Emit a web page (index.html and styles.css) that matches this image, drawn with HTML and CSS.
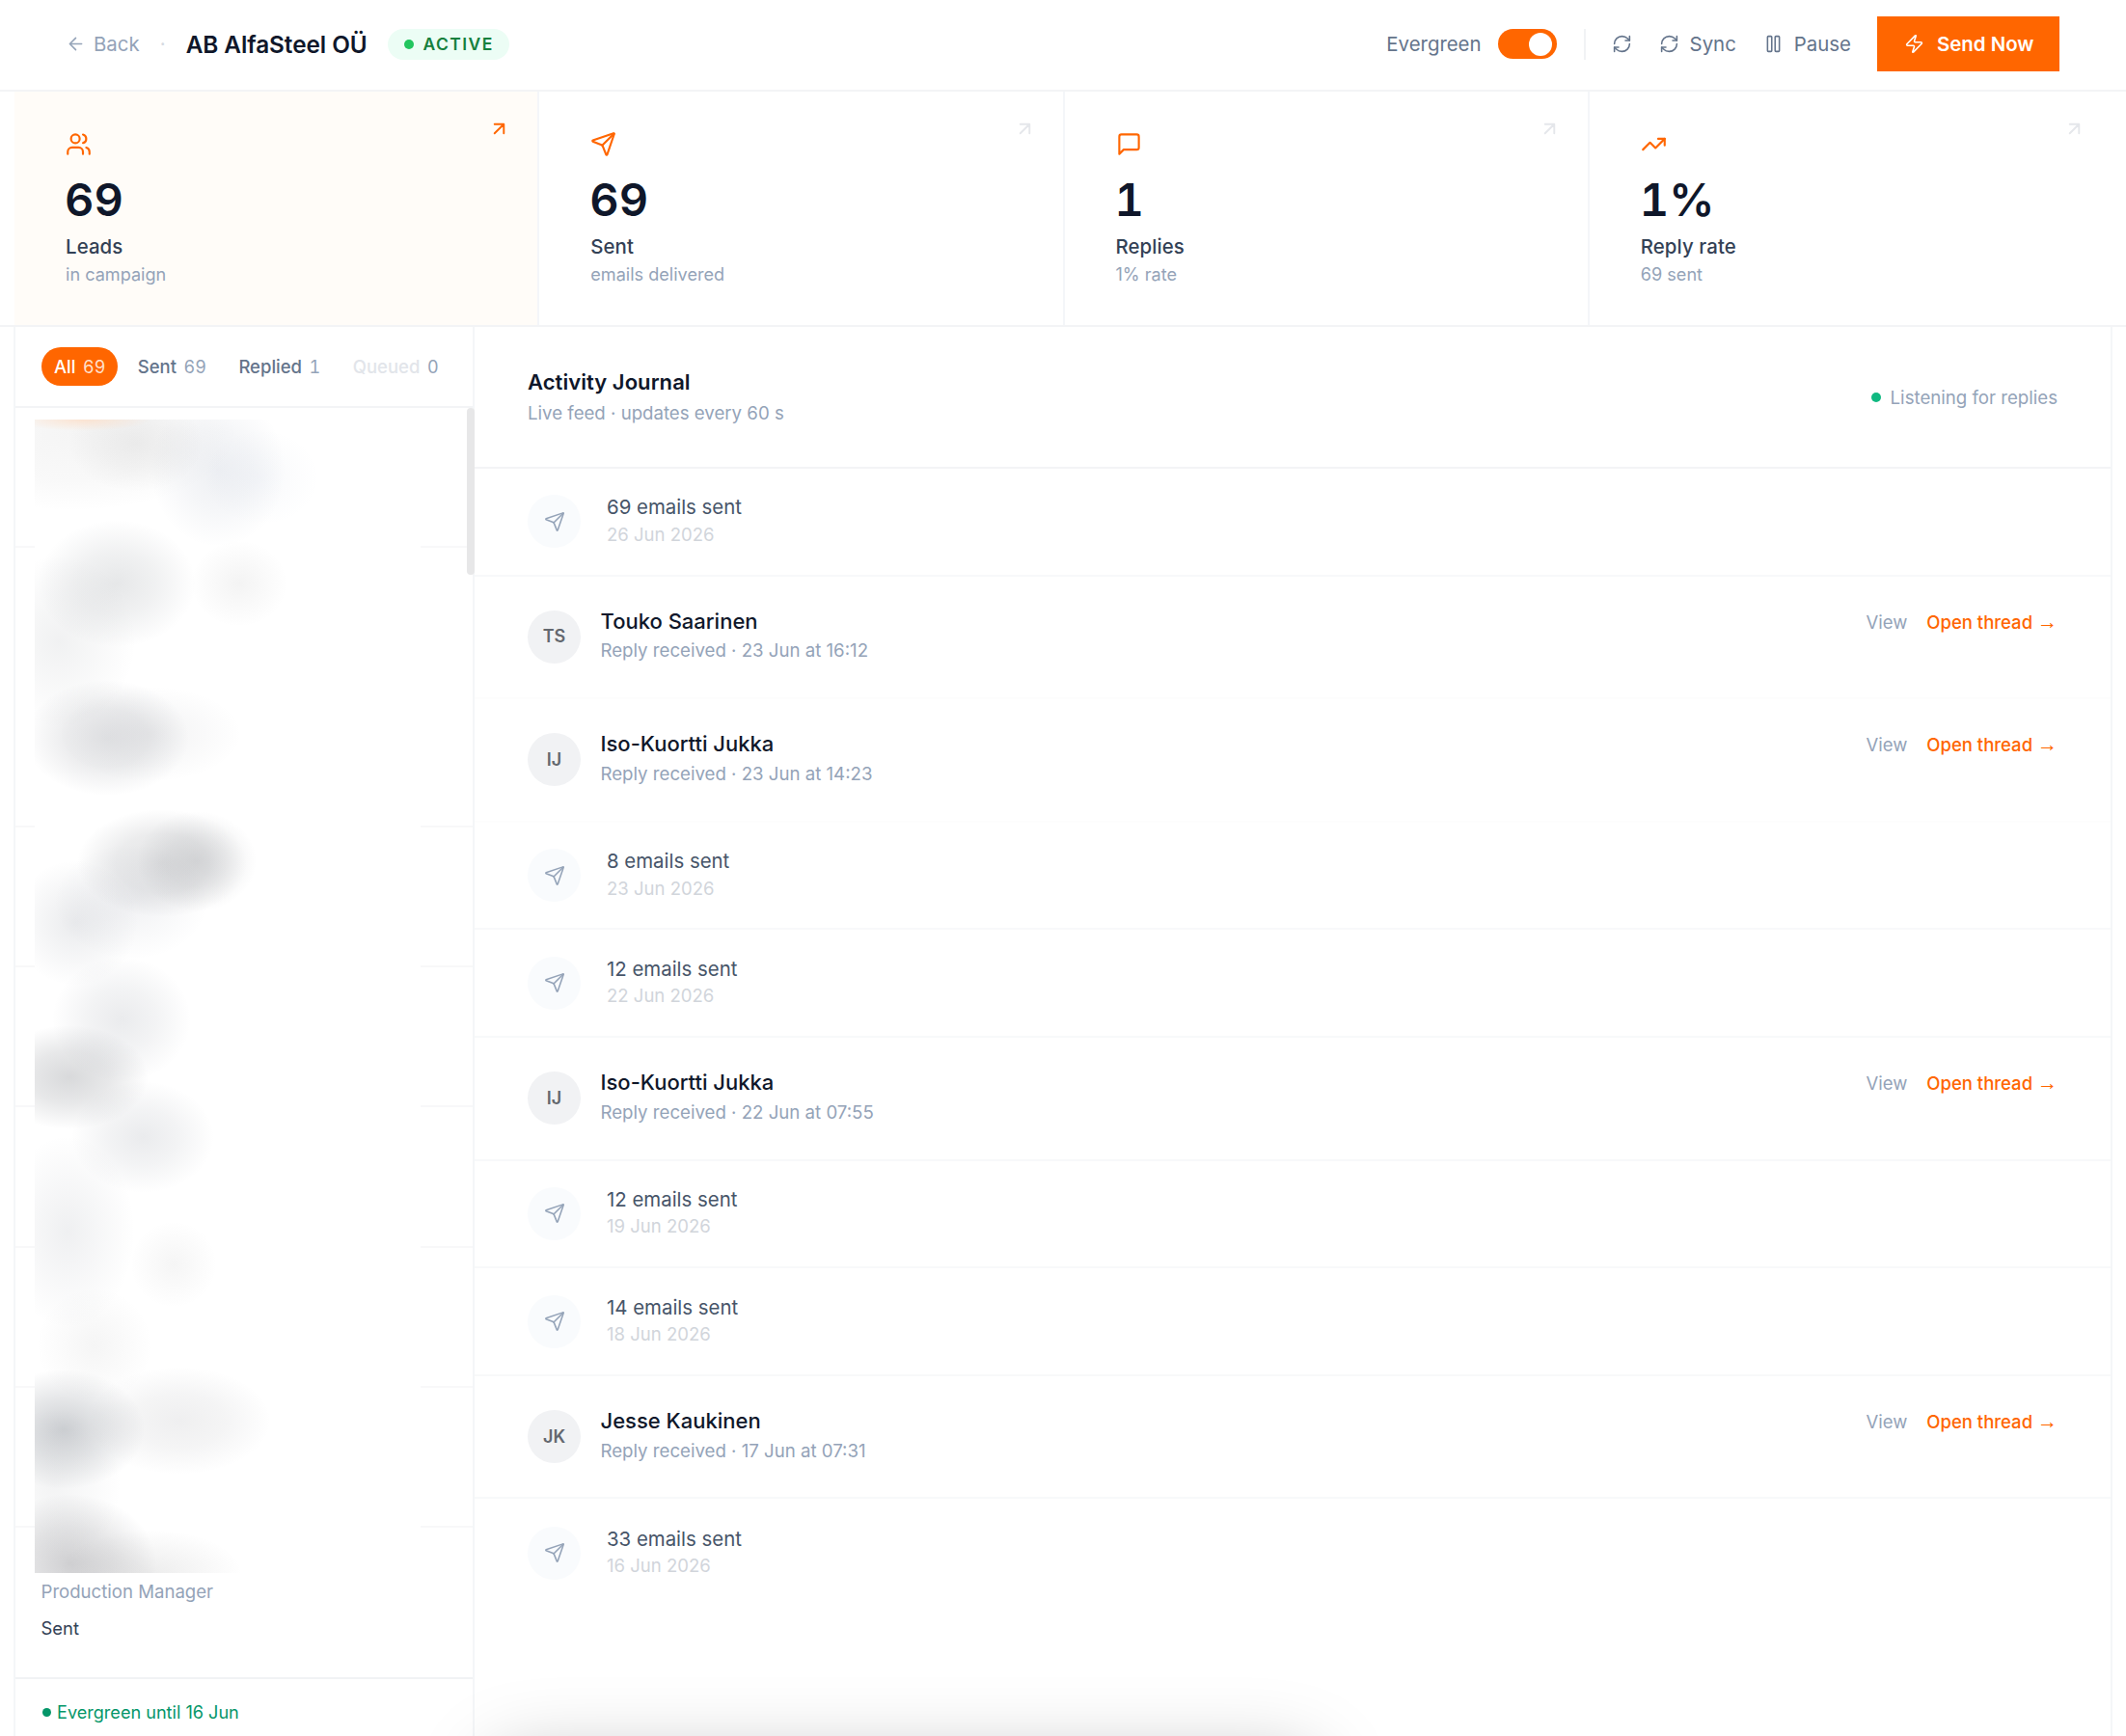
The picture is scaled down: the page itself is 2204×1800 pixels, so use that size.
FILE: index.html
```html
<!DOCTYPE html>
<html lang="en">
<head>
<meta charset="utf-8">
<title>AB AlfaSteel OÜ</title>
<link rel="stylesheet" href="styles.css">
</head>
<body>
<svg class="sprite" aria-hidden="true">
  <symbol id="i-back" viewBox="0 0 24 24"><path d="m12 19-7-7 7-7M19 12H5"/></symbol>
  <symbol id="i-refresh" viewBox="0 0 24 24"><path d="M3 12a9 9 0 0 1 9-9 9.75 9.75 0 0 1 6.74 2.74L21 8"/><path d="M21 3v5h-5"/><path d="M21 12a9 9 0 0 1-9 9 9.75 9.75 0 0 1-6.74-2.74L3 16"/><path d="M8 16H3v5"/></symbol>
  <symbol id="i-pause" viewBox="0 0 24 24"><rect x="14" y="3" width="5" height="18" rx="1"/><rect x="5" y="3" width="5" height="18" rx="1"/></symbol>
  <symbol id="i-bolt" viewBox="0 0 24 24"><path d="M4 14a1 1 0 0 1-.78-1.63l9.9-10.2a.5.5 0 0 1 .86.46l-1.92 6.02A1 1 0 0 0 13 10h7a1 1 0 0 1 .78 1.63l-9.9 10.2a.5.5 0 0 1-.86-.46l1.92-6.02A1 1 0 0 0 11 14z"/></symbol>
  <symbol id="i-users" viewBox="0 0 24 24"><path d="M16 21v-2a4 4 0 0 0-4-4H6a4 4 0 0 0-4 4v2"/><circle cx="9" cy="7" r="4"/><path d="M22 21v-2a4 4 0 0 0-3-3.87"/><path d="M16 3.13a4 4 0 0 1 0 7.75"/></symbol>
  <symbol id="i-send" viewBox="0 0 24 24"><path d="M14.536 21.686a.5.5 0 0 0 .937-.024l6.5-19a.496.496 0 0 0-.635-.635l-19 6.5a.5.5 0 0 0-.024.937l7.93 3.18a2 2 0 0 1 1.112 1.11z"/><path d="m21.854 2.147-10.94 10.939"/></symbol>
  <symbol id="i-message" viewBox="0 0 24 24"><path d="M21 15a2 2 0 0 1-2 2H7l-4 4V5a2 2 0 0 1 2-2h14a2 2 0 0 1 2 2z"/></symbol>
  <symbol id="i-trend" viewBox="0 0 24 24"><path d="M22 7l-8.5 8.5-5-5L2 17"/><path d="M16 7h6v6"/></symbol>
  <symbol id="i-out" viewBox="0 0 24 24"><path d="M7 7h10v10M7 17 17 7"/></symbol>
</svg>

<header class="topbar">
  <div class="group">
    <a class="back"><svg class="ico"><use href="#i-back"/></svg>Back</a>
    <span class="sep">·</span>
    <h1>AB AlfaSteel OÜ</h1>
    <span class="badge"><i></i>ACTIVE</span>
  </div>
  <div class="group actions">
    <span>Evergreen</span>
    <span class="toggle"><i></i></span>
    <span class="divider"></span>
    <svg class="ico refresh"><use href="#i-refresh"/></svg>
    <span class="act sync"><svg class="ico"><use href="#i-refresh"/></svg>Sync</span>
    <span class="act pause"><svg class="ico"><use href="#i-pause"/></svg>Pause</span>
    <button class="send"><svg class="ico"><use href="#i-bolt"/></svg>Send Now</button>
  </div>
</header>

<section class="stats">
  <div class="stat active"><svg class="ico"><use href="#i-users"/></svg><svg class="out"><use href="#i-out"/></svg><b>69</b><strong>Leads</strong><small>in campaign</small></div>
  <div class="stat"><svg class="ico"><use href="#i-send"/></svg><svg class="out"><use href="#i-out"/></svg><b>69</b><strong>Sent</strong><small>emails delivered</small></div>
  <div class="stat"><svg class="ico"><use href="#i-message"/></svg><svg class="out"><use href="#i-out"/></svg><b>1</b><strong>Replies</strong><small>1% rate</small></div>
  <div class="stat"><svg class="ico"><use href="#i-trend"/></svg><svg class="out"><use href="#i-out"/></svg><b>1%</b><strong>Reply rate</strong><small>69 sent</small></div>
</section>

<main class="main">
  <aside class="leads">
    <nav class="tabs">
      <span class="tab on">All <em>69</em></span>
      <span class="tab">Sent <em>69</em></span>
      <span class="tab">Replied <em>1</em></span>
      <span class="tab off">Queued <em>0</em></span>
    </nav>
    <div class="list">
      <div class="lead"></div><div class="lead faint"></div><div class="lead"></div><div class="lead"></div>
      <div class="lead"></div><div class="lead"></div><div class="lead"></div><div class="lead"></div>
      <div class="lead last"><p class="role">Production Manager</p><p class="state">Sent</p></div>
      <div class="redacted"></div>
      <div class="thumb"></div>
    </div>
    <footer class="foot"><i></i>Evergreen until 16 Jun</footer>
  </aside>

  <section class="journal">
    <div class="jhead">
      <div><h2>Activity Journal</h2><p>Live feed · updates every 60 s</p></div>
      <span class="listening"><i></i>Listening for replies</span>
    </div>
    <div class="row sys"><span class="dot"><svg class="ico"><use href="#i-send"/></svg></span><div><p>69 emails sent</p><time>26 Jun 2026</time></div></div>
    <div class="row reply faint"><span class="dot">TS</span><div><h3>Touko Saarinen</h3><p>Reply received · 23 Jun at 16:12</p></div><div class="links"><a>View</a><a class="open">Open thread <i>→</i></a></div></div>
    <div class="row reply faint"><span class="dot">IJ</span><div><h3>Iso-Kuortti Jukka</h3><p>Reply received · 23 Jun at 14:23</p></div><div class="links"><a>View</a><a class="open">Open thread <i>→</i></a></div></div>
    <div class="row sys"><span class="dot"><svg class="ico"><use href="#i-send"/></svg></span><div><p>8 emails sent</p><time>23 Jun 2026</time></div></div>
    <div class="row sys"><span class="dot"><svg class="ico"><use href="#i-send"/></svg></span><div><p>12 emails sent</p><time>22 Jun 2026</time></div></div>
    <div class="row reply"><span class="dot">IJ</span><div><h3>Iso-Kuortti Jukka</h3><p>Reply received · 22 Jun at 07:55</p></div><div class="links"><a>View</a><a class="open">Open thread <i>→</i></a></div></div>
    <div class="row sys"><span class="dot"><svg class="ico"><use href="#i-send"/></svg></span><div><p>12 emails sent</p><time>19 Jun 2026</time></div></div>
    <div class="row sys"><span class="dot"><svg class="ico"><use href="#i-send"/></svg></span><div><p>14 emails sent</p><time>18 Jun 2026</time></div></div>
    <div class="row reply"><span class="dot">JK</span><div><h3>Jesse Kaukinen</h3><p>Reply received · 17 Jun at 07:31</p></div><div class="links"><a>View</a><a class="open">Open thread <i>→</i></a></div></div>
    <div class="row sys end"><span class="dot"><svg class="ico"><use href="#i-send"/></svg></span><div><p>33 emails sent</p><time>16 Jun 2026</time></div></div>
  </section>
</main>
<div class="dock"></div>
</body>
</html>
```
FILE: styles.css
```css
* { box-sizing: border-box; margin: 0; padding: 0; }
html, body { height: 1800px; overflow: hidden; }
body {
  display: flex; flex-direction: column;
  background: #fff; color: #0f172a;
  font: 400 20.4px/30px Inter, "Liberation Sans", sans-serif;
}
i, em { font-style: normal; }
.sprite { position: absolute; width: 0; height: 0; }
svg { display: block; flex: none; fill: none; stroke: currentColor; stroke-width: 2; stroke-linecap: round; stroke-linejoin: round; overflow: visible; }

/* top bar */
.topbar { height: 95px; flex: none; display: flex; justify-content: space-between; padding: 0 69px 2px 68px; border-bottom: 2px solid #f3f4f6; }
.group { display: flex; align-items: center; }
.back { display: flex; align-items: center; gap: 8px; color: #94a3b8; }
.back .ico { width: 21px; height: 21px; stroke-width: 1.8; }
.sep { width: 48px; text-align: center; color: #d5dae1; }
h1 { font-size: 24.3px; font-weight: 600; letter-spacing: -.05px; }
.badge { display: flex; align-items: center; height: 32px; margin-left: 21px; padding: 0 16px 0 17px; border-radius: 16px; background: #ecfdf5; color: #15803d; font-size: 17.5px; font-weight: 600; letter-spacing: 1.4px; }
.badge i { width: 10px; height: 10px; margin-right: 10px; border-radius: 50%; background: #22c55e; }
.actions { color: #64748b; }
.toggle { width: 61px; height: 31px; margin-left: 17px; border-radius: 16px; background: #ff6600; display: flex; align-items: center; justify-content: flex-end; padding: 0 5px; }
.toggle i { width: 24px; height: 24px; border-radius: 50%; background: #fff; }
.divider { width: 2px; height: 32px; margin: 0 27px 0 28px; background: #f1f3f5; }
.actions .ico { width: 21px; height: 21px; stroke-width: 1.8; }
.act { display: flex; align-items: center; gap: 10.5px; }
.sync { margin-left: 28.5px; }
.pause { margin-left: 28.5px; }
.send { display: flex; align-items: center; gap: 13px; width: 189px; height: 57px; margin-left: 27px; padding-left: 28px; border: 0; background: #ff6600; color: #fff; font: 600 20.4px/30px Inter, sans-serif; }

/* figures */
.stats { height: 244px; flex: none; display: grid; grid-template-columns: repeat(4, 1fr); padding: 0 12px 0 15px; border-bottom: 2px solid #f3f4f6; }
.stat { position: relative; display: flex; flex-direction: column; padding: 41px 0 0 53px; border-right: 2px solid #f4f6f9; }
.stat:last-child { border-right-color: transparent; }
.stat.active { background: #fffcf8; }
.stat .ico { width: 27px; height: 27px; color: #ff6600; stroke-width: 1.9; }
.stat .out { position: absolute; top: 27px; right: 28px; width: 23px; height: 23px; color: #e5e7eb; }
.stat.active .out { color: #ff6600; }
.stat b { margin-top: 20px; margin-left: -1px; font-size: 47px; line-height: 47px; font-weight: 600; font-variant-numeric: tabular-nums; }
.stat strong { margin-top: 11px; font-weight: 450; letter-spacing: .1px; color: #334155; }
.stat small { font-size: 18.1px; line-height: 26px; color: #94a3b8; }

.main { flex: 1; display: grid; grid-template-columns: 478px 1fr; padding: 0 14px; min-height: 0; }

/* lead list */
.leads { display: flex; flex-direction: column; border: solid #f4f6f8; border-width: 0 2px; }
.tabs { height: 84px; flex: none; display: flex; align-items: flex-start; gap: 7.5px; padding: 21px 0 0 27px; border-bottom: 2px solid #f3f4f6; }
.tab { display: flex; align-items: center; height: 40px; padding: 0 13px; border-radius: 20px; font-size: 18.5px; font-weight: 450; color: #64748b; gap: 7.5px; white-space: nowrap; }
.tab em { font-weight: 400; font-size: 18px; color: #94a3b8; font-variant-numeric: tabular-nums; padding-top: 2px; }
.tab.on { background: #ff6600; color: #fff; }
.tab.on em { color: #ffe0cc; }
.tab.off { color: #e2e5ea; }
.list { position: relative; flex: none; height: 1316px; }
.lead { height: 145.1px; border-bottom: 2px solid #f8f8f9; }
.lead.faint, .lead.last { border-bottom-color: transparent; }
.lead.last { padding: 51px 0 0 26.5px; }
.role { font-size: 18.6px; line-height: 30px; color: #94a3b8; }
.state { font-size: 18.4px; line-height: 30px; color: #334155; padding-top: 8px; height: 40px; }
.thumb { position: absolute; top: 0; right: -2px; width: 8px; height: 173px; border-radius: 4px; background: #e7e7e8; }
.redacted {
  position: absolute; left: 20px; top: 12px; width: 400px; height: 1196px;
  background:
    radial-gradient(70px 12px at 50px 0, rgba(255,215,185,.6), transparent),
    radial-gradient(70px 50px at 105px 25px, rgba(60,60,60,.07), rgba(60,60,60,.04) 50%, transparent),
    radial-gradient(170px 80px at 40px 15px, rgba(60,60,60,.05), rgba(60,60,60,.03) 60%, transparent),
    radial-gradient(70px 80px at 190px 52px, rgba(60,80,120,.09), rgba(60,80,120,.05) 50%, transparent),
    radial-gradient(60px 50px at 235px 60px, rgba(80,110,160,.04), transparent),
    radial-gradient(82px 66px at 85px 170px, rgba(50,60,70,.12), rgba(50,60,70,.07) 50%, transparent),
    radial-gradient(50px 45px at 212px 170px, rgba(60,60,60,.06), transparent),
    radial-gradient(80px 90px at 25px 230px, rgba(50,60,70,.07), transparent),
    radial-gradient(85px 60px at 75px 330px, rgba(45,50,65,.13), rgba(45,50,65,.09) 50%, transparent),
    radial-gradient(95px 50px at 120px 326px, rgba(45,50,65,.06), rgba(45,50,65,.03) 50%, transparent),
    radial-gradient(88px 56px at 132px 460px, rgba(40,45,55,.13), rgba(40,45,55,.09) 55%, transparent),
    radial-gradient(62px 52px at 168px 458px, rgba(40,45,55,.12), rgba(40,45,55,.07) 50%, transparent),
    radial-gradient(65px 65px at 42px 522px, rgba(50,60,80,.1), rgba(50,60,80,.05) 50%, transparent),
    radial-gradient(80px 60px at 100px 500px, rgba(50,60,90,.07), transparent),
    radial-gradient(72px 65px at 90px 622px, rgba(50,60,80,.1), rgba(50,60,80,.06) 50%, transparent),
    radial-gradient(82px 54px at 36px 682px, rgba(40,45,55,.18), rgba(40,45,55,.11) 50%, transparent),
    radial-gradient(74px 58px at 112px 744px, rgba(50,60,80,.1), rgba(50,60,80,.06) 50%, transparent),
    radial-gradient(70px 100px at 34px 842px, rgba(50,60,80,.08), rgba(50,60,80,.04) 50%, transparent),
    radial-gradient(45px 45px at 144px 876px, rgba(60,60,60,.05), transparent),
    radial-gradient(60px 60px at 62px 960px, rgba(60,60,60,.05), transparent),
    radial-gradient(84px 62px at 30px 1047px, rgba(40,50,65,.23), rgba(40,50,65,.12) 50%, transparent),
    radial-gradient(95px 56px at 150px 1038px, rgba(50,50,60,.08), rgba(50,50,60,.05) 50%, transparent),
    radial-gradient(70px 80px at 20px 1105px, rgba(50,60,70,.06), transparent),
    radial-gradient(90px 72px at 36px 1186px, rgba(40,40,50,.22), rgba(40,40,50,.12) 50%, transparent),
    radial-gradient(95px 45px at 120px 1196px, rgba(50,50,50,.09), transparent),
    #fff;
}
.foot { flex: 1; display: flex; align-items: flex-start; border-top: 2px solid #f1f3f5; padding: 18px 0 0 28px; font-size: 18.1px; line-height: 32px; color: #059669; }
.foot i { width: 9px; height: 9px; margin: 12px 6px 0 0; border-radius: 50%; background: #059669; }

/* journal */
.journal { border-right: 2px solid #f4f6f8; }
.jhead { height: 147px; display: flex; align-items: center; justify-content: space-between; padding: 0 55px; border-bottom: 2px solid #f3f4f6; }
.jhead h2 { font-size: 22px; line-height: 32px; font-weight: 600; letter-spacing: .05px; }
.jhead p { font-size: 18.65px; line-height: 32px; color: #94a3b8; }
.listening { display: flex; align-items: center; font-size: 18.65px; color: #94a3b8; }
.listening i { width: 10px; height: 10px; margin-right: 10px; border-radius: 50%; background: #10b981; }
.row { display: flex; align-items: center; padding: 0 55px; border-bottom: 2px solid #f8f9fa; }
.row.faint { border-bottom-color: #fdfdfd; }
.row.end { border-bottom: 0; }
.dot { width: 55px; height: 55px; flex: none; border-radius: 50%; display: flex; align-items: center; justify-content: center; font-size: 18px; font-weight: 600; }
.sys { height: 111.7px; }
.sys .dot { margin-right: 27px; background: #f9fbfd; color: #94a3b8; }
.sys .ico { width: 22px; height: 22px; stroke-width: 1.7; }
.sys p { line-height: 28.5px; color: #475569; }
.sys time { display: block; margin-top: -1px; padding-bottom: 1px; font-size: 18.55px; line-height: 28.5px; color: #d1d5db; }
.reply { height: 127.5px; }
.reply .dot { margin-right: 20.5px; background: #f1f2f4; color: #64686f; }
.reply h3 { font-size: 22px; line-height: 29.5px; font-weight: 500; }
.reply p { font-size: 18.65px; line-height: 31.5px; color: #94a3b8; }
.links { display: flex; gap: 20px; height: 61px; margin-left: auto; font-size: 18.5px; line-height: 31px; color: #94a3b8; }
.open { font-weight: 500; color: #ff6600; }
.open i { font-family: "Liberation Sans", sans-serif; font-size: 21px; font-weight: 400; line-height: 0; }

/* panel just under the fold, only its shadow reaches the page */
.dock { position: fixed; left: 510px; top: 1822px; width: 855px; height: 100px; border-radius: 30px; box-shadow: 0 0 80px rgba(0, 0, 0, .25); }
```
